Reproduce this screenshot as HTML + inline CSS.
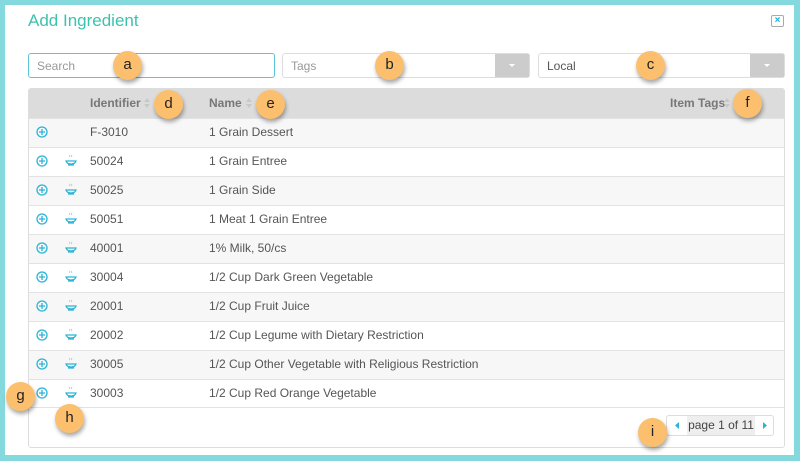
<!DOCTYPE html>
<html><head><style>
*{box-sizing:border-box;margin:0;padding:0}
body{width:800px;height:461px;background:#84d9de;font-family:"Liberation Sans",sans-serif;position:relative;overflow:hidden}
.m{position:absolute;left:5px;top:5px;width:789px;height:450px;background:#fff}
.t{position:absolute;left:28px;top:11px;font-size:17px;color:#3cc2ae}
.x{position:absolute;left:771px;top:15px;width:13px;height:12px;border:1px solid #aaa;border-radius:2px;color:#1bb0d8;font-size:10px;line-height:10px;text-align:center;font-weight:bold}
.in{position:absolute;top:53px;height:25px;border:1px solid #ddd;border-radius:3px;font-size:12px;color:#999;padding:5px 8px}
.dd{position:absolute;right:0;top:0;width:34px;height:23px;background:#ccc}
.dd:after{content:"";position:absolute;left:14px;top:10px;border:3px solid transparent;border-top:3px solid #fff}
.tb{position:absolute;left:28px;top:88px;width:757px;height:360px;border:1px solid #ddd;border-radius:3px;overflow:hidden}
.hd{height:29px;background:#dcdcdc;position:relative;font-size:12px;font-weight:bold;color:#777}
.hd span{position:absolute;top:7px}
.hd svg{position:absolute;top:8px}
.r{height:29px;border-top:1px solid #e3e3e3;position:relative;font-size:12px;color:#555}
.r span{position:absolute;top:6px}
.p{position:absolute;left:7px;top:7px}
.ic{position:absolute;left:36px;top:6px}
.b{position:absolute;width:29px;height:29px;border-radius:50%;background:#fbbf6e;box-shadow:1px 3px 4px rgba(0,0,0,.35);color:#222;font-size:15px;text-align:center;line-height:28px}
.pg{position:absolute;left:666px;top:415px;width:108px;height:21px;border:1px solid #ddd;border-radius:3px;font-size:12px;color:#444}
.pg .c{position:absolute;left:20px;top:0;width:68px;height:19px;background:#eee;line-height:19px;text-align:center;white-space:nowrap}
</style></head><body>
<div class="m"></div>
<div class="t">Add Ingredient</div>
<div class="x">×</div>
<div class="in" style="left:28px;width:247px;border-color:#5bc6d8">Search</div>
<div class="in" style="left:282px;width:248px">Tags<div class="dd"></div></div>
<div class="in" style="left:538px;width:247px;color:#555">Local<div class="dd"></div></div>
<div class="tb">
<div class="hd"><span style="left:61px">Identifier</span><svg style="left:114px" width="8" height="12"><path d="M1 5l3-4 3 4zM1 7l3 4 3-4z" fill="#c8c8c8"/></svg><span style="left:180px">Name</span><svg style="left:216px" width="8" height="12"><path d="M1 5l3-4 3 4zM1 7l3 4 3-4z" fill="#c8c8c8"/></svg><span style="left:641px">Item Tags</span><svg style="left:694px" width="8" height="12"><path d="M1 5l3-4 3 4zM1 7l3 4 3-4z" fill="#c8c8c8"/></svg></div>
<div class="r" style="background:#f7f7f7"><svg class="p" width="12" height="12"><circle cx="6" cy="6" r="5" stroke="#2ab4d6" stroke-width="1.3" fill="none"/><path d="M6 3v6M3 6h6" stroke="#2ab4d6" stroke-width="1.3"/></svg><span style="left:61px">F-3010</span><span style="left:180px">1 Grain Dessert</span></div>
<div class="r" style="background:#fff"><svg class="p" width="12" height="12"><circle cx="6" cy="6" r="5" stroke="#2ab4d6" stroke-width="1.3" fill="none"/><path d="M6 3v6M3 6h6" stroke="#2ab4d6" stroke-width="1.3"/></svg><svg class="ic" width="12" height="12"><path d="M5 1q-1 1 0 2M7 1q-1 1 0 2" stroke="#9ddbe8" fill="none"/><path d="M1 7h10q-1 3-5 3t-5-3zM3 11h6" stroke="#2ab4d6" fill="none" stroke-width="1.2"/></svg><span style="left:61px">50024</span><span style="left:180px">1 Grain Entree</span></div>
<div class="r" style="background:#f7f7f7"><svg class="p" width="12" height="12"><circle cx="6" cy="6" r="5" stroke="#2ab4d6" stroke-width="1.3" fill="none"/><path d="M6 3v6M3 6h6" stroke="#2ab4d6" stroke-width="1.3"/></svg><svg class="ic" width="12" height="12"><path d="M5 1q-1 1 0 2M7 1q-1 1 0 2" stroke="#9ddbe8" fill="none"/><path d="M1 7h10q-1 3-5 3t-5-3zM3 11h6" stroke="#2ab4d6" fill="none" stroke-width="1.2"/></svg><span style="left:61px">50025</span><span style="left:180px">1 Grain Side</span></div>
<div class="r" style="background:#fff"><svg class="p" width="12" height="12"><circle cx="6" cy="6" r="5" stroke="#2ab4d6" stroke-width="1.3" fill="none"/><path d="M6 3v6M3 6h6" stroke="#2ab4d6" stroke-width="1.3"/></svg><svg class="ic" width="12" height="12"><path d="M5 1q-1 1 0 2M7 1q-1 1 0 2" stroke="#9ddbe8" fill="none"/><path d="M1 7h10q-1 3-5 3t-5-3zM3 11h6" stroke="#2ab4d6" fill="none" stroke-width="1.2"/></svg><span style="left:61px">50051</span><span style="left:180px">1 Meat 1 Grain Entree</span></div>
<div class="r" style="background:#f7f7f7"><svg class="p" width="12" height="12"><circle cx="6" cy="6" r="5" stroke="#2ab4d6" stroke-width="1.3" fill="none"/><path d="M6 3v6M3 6h6" stroke="#2ab4d6" stroke-width="1.3"/></svg><svg class="ic" width="12" height="12"><path d="M5 1q-1 1 0 2M7 1q-1 1 0 2" stroke="#9ddbe8" fill="none"/><path d="M1 7h10q-1 3-5 3t-5-3zM3 11h6" stroke="#2ab4d6" fill="none" stroke-width="1.2"/></svg><span style="left:61px">40001</span><span style="left:180px">1% Milk, 50/cs</span></div>
<div class="r" style="background:#fff"><svg class="p" width="12" height="12"><circle cx="6" cy="6" r="5" stroke="#2ab4d6" stroke-width="1.3" fill="none"/><path d="M6 3v6M3 6h6" stroke="#2ab4d6" stroke-width="1.3"/></svg><svg class="ic" width="12" height="12"><path d="M5 1q-1 1 0 2M7 1q-1 1 0 2" stroke="#9ddbe8" fill="none"/><path d="M1 7h10q-1 3-5 3t-5-3zM3 11h6" stroke="#2ab4d6" fill="none" stroke-width="1.2"/></svg><span style="left:61px">30004</span><span style="left:180px">1/2 Cup Dark Green Vegetable</span></div>
<div class="r" style="background:#f7f7f7"><svg class="p" width="12" height="12"><circle cx="6" cy="6" r="5" stroke="#2ab4d6" stroke-width="1.3" fill="none"/><path d="M6 3v6M3 6h6" stroke="#2ab4d6" stroke-width="1.3"/></svg><svg class="ic" width="12" height="12"><path d="M5 1q-1 1 0 2M7 1q-1 1 0 2" stroke="#9ddbe8" fill="none"/><path d="M1 7h10q-1 3-5 3t-5-3zM3 11h6" stroke="#2ab4d6" fill="none" stroke-width="1.2"/></svg><span style="left:61px">20001</span><span style="left:180px">1/2 Cup Fruit Juice</span></div>
<div class="r" style="background:#fff"><svg class="p" width="12" height="12"><circle cx="6" cy="6" r="5" stroke="#2ab4d6" stroke-width="1.3" fill="none"/><path d="M6 3v6M3 6h6" stroke="#2ab4d6" stroke-width="1.3"/></svg><svg class="ic" width="12" height="12"><path d="M5 1q-1 1 0 2M7 1q-1 1 0 2" stroke="#9ddbe8" fill="none"/><path d="M1 7h10q-1 3-5 3t-5-3zM3 11h6" stroke="#2ab4d6" fill="none" stroke-width="1.2"/></svg><span style="left:61px">20002</span><span style="left:180px">1/2 Cup Legume with Dietary Restriction</span></div>
<div class="r" style="background:#f7f7f7"><svg class="p" width="12" height="12"><circle cx="6" cy="6" r="5" stroke="#2ab4d6" stroke-width="1.3" fill="none"/><path d="M6 3v6M3 6h6" stroke="#2ab4d6" stroke-width="1.3"/></svg><svg class="ic" width="12" height="12"><path d="M5 1q-1 1 0 2M7 1q-1 1 0 2" stroke="#9ddbe8" fill="none"/><path d="M1 7h10q-1 3-5 3t-5-3zM3 11h6" stroke="#2ab4d6" fill="none" stroke-width="1.2"/></svg><span style="left:61px">30005</span><span style="left:180px">1/2 Cup Other Vegetable with Religious Restriction</span></div>
<div class="r" style="background:#fff;border-bottom:1px solid #e3e3e3"><svg class="p" width="12" height="12"><circle cx="6" cy="6" r="5" stroke="#2ab4d6" stroke-width="1.3" fill="none"/><path d="M6 3v6M3 6h6" stroke="#2ab4d6" stroke-width="1.3"/></svg><svg class="ic" width="12" height="12"><path d="M5 1q-1 1 0 2M7 1q-1 1 0 2" stroke="#9ddbe8" fill="none"/><path d="M1 7h10q-1 3-5 3t-5-3zM3 11h6" stroke="#2ab4d6" fill="none" stroke-width="1.2"/></svg><span style="left:61px">30003</span><span style="left:180px">1/2 Cup Red Orange Vegetable</span></div>
</div>
<div class="pg"><svg style="position:absolute;left:8px;top:6px" width="5" height="7"><path d="M4 0v7L0 3.5z" fill="#2ab4d6"/></svg><div class="c">page 1 of 11</div><svg style="position:absolute;left:95px;top:6px" width="5" height="7"><path d="M1 0v7l4-3.5z" fill="#2ab4d6"/></svg></div>
<div class="b" style="left:113px;top:51px">a</div>
<div class="b" style="left:375px;top:51px">b</div>
<div class="b" style="left:636px;top:51px">c</div>
<div class="b" style="left:154px;top:90px">d</div>
<div class="b" style="left:256px;top:90px">e</div>
<div class="b" style="left:733px;top:89px">f</div>
<div class="b" style="left:6px;top:382px">g</div>
<div class="b" style="left:55px;top:404px">h</div>
<div class="b" style="left:638px;top:418px">i</div>
</body></html>
